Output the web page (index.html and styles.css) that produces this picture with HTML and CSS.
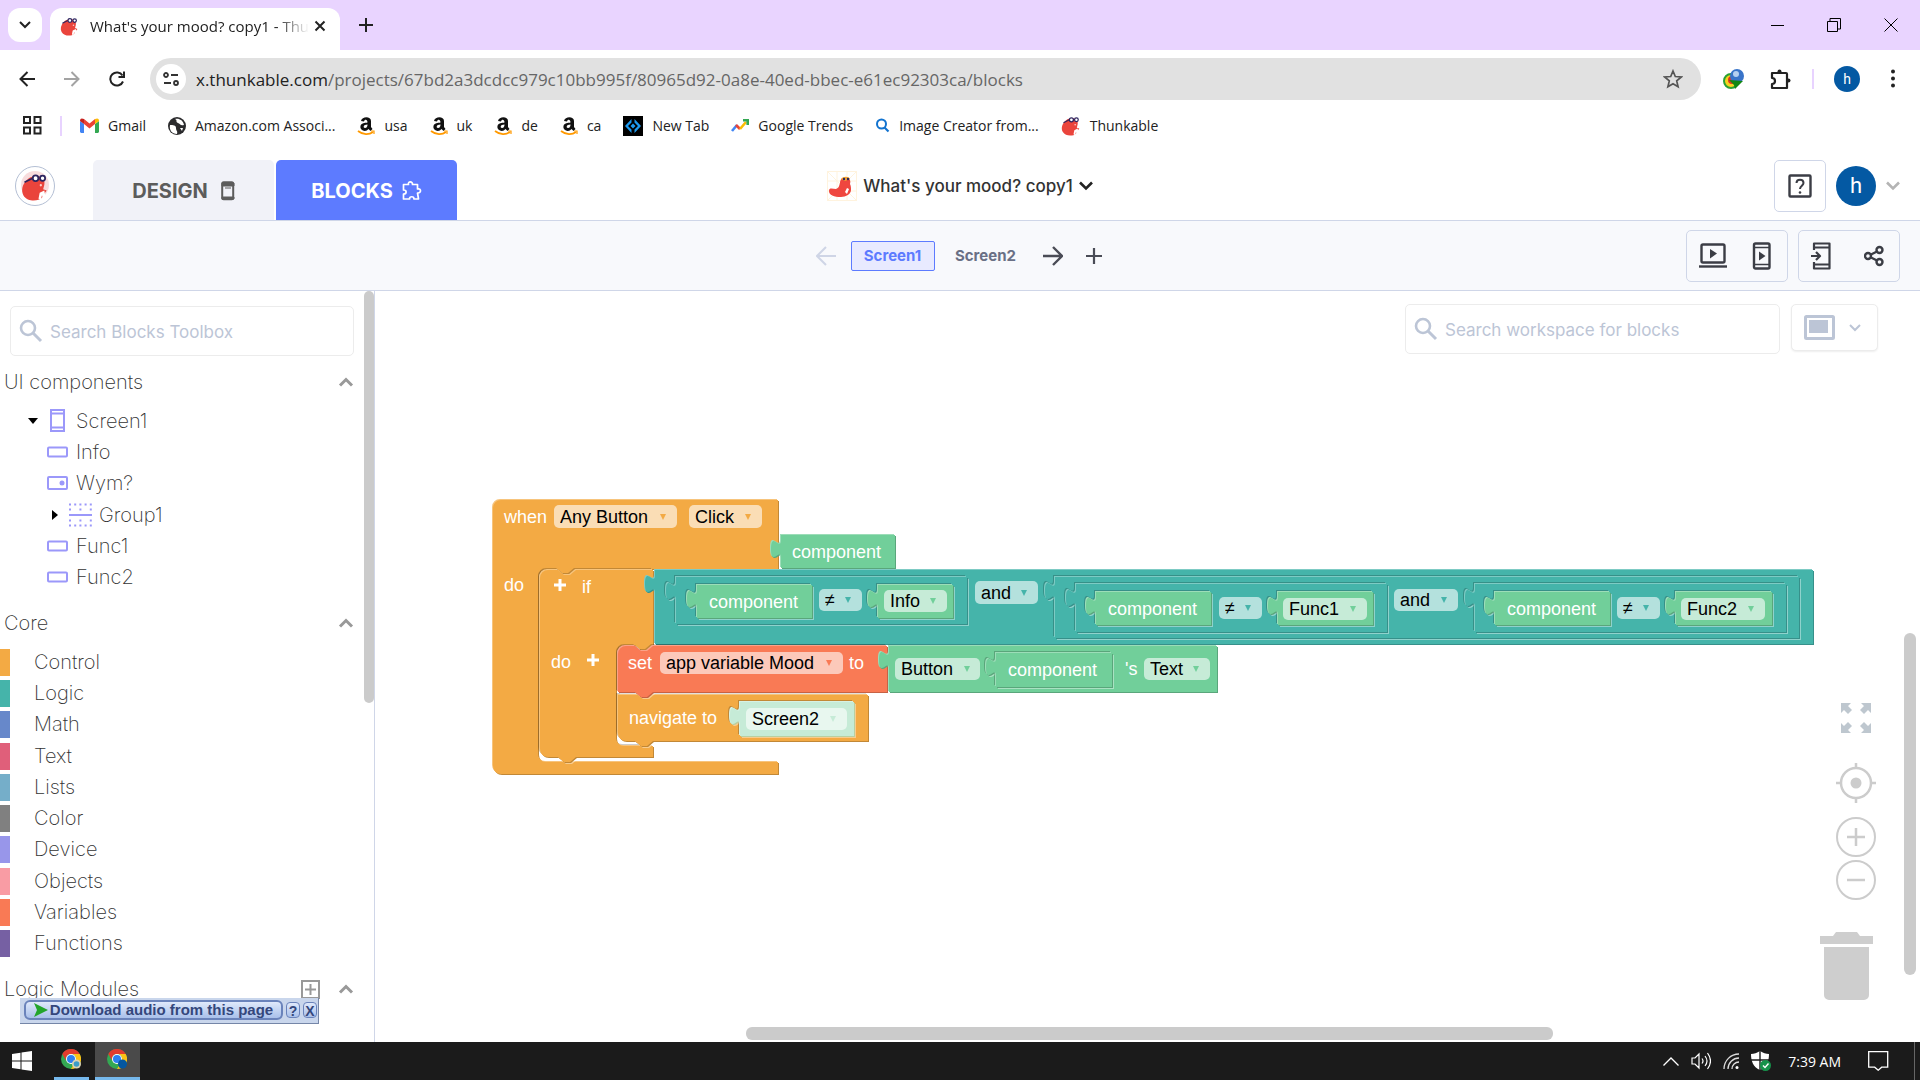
FILE: index.html
```html
<!DOCTYPE html>
<html lang="en">
<head>
  <meta charset="UTF-8" />
  <meta name="viewport" content="width=device-width, initial-scale=1.0"/>
  <title>What's your mood? copy1 - Thunkable</title>
  <link rel="stylesheet" href="styles.css">
</head>
<body>
  <!-- shared shapes -->
  <svg class="defs" aria-hidden="true">
    <symbol id="beaver" viewBox="0 0 24 24">
      <path d="M5 6C1 10 0 15 2 19c3 5 9 5 13 4 3-1 4-3 4-4l3-4-3-1 1-4c1-5-3-8-8-7-3 0-5 1-7 3z" fill="#ea443c"/>
      <path d="M16 17l4-2 1 6-2 1-1-3-1 4-2-1z" fill="#fff"/>
      <path d="M3 8l7-3.500" stroke="#2d2560" stroke-width="1.400"/>
      <circle cx="12.500" cy="4.500" r="2.400" fill="#fff" stroke="#2d2560" stroke-width="1.500"/>
      <circle cx="18.500" cy="4.500" r="2.200" fill="#fff" stroke="#2d2560" stroke-width="1.500"/>
      <circle cx="17" cy="10.500" r="1" fill="#fbd0cc"/>
    </symbol>
    <symbol id="amazon" viewBox="0 0 18 20">
      <path d="M4 5c1-5 10-5 10 0v6l1.500 2-2 2-2-2c-3 4-9 1-8-3C4 7 8 7 10.500 6.500 10.500 3 7.500 3 7 5.500zM10.500 8.500C6 8.500 6 12 8 12s2.500-2 2.500-3.500z" fill="#111"/>
      <path d="M1 15c5 4 11 4 15 1" fill="none" stroke="#f90" stroke-width="1.800"/>
      <path d="M14 15h3v3" fill="none" stroke="#f90" stroke-width="1.200"/>
    </symbol>
    <symbol id="search" viewBox="0 0 24 24">
      <circle cx="9" cy="9" r="7" fill="none" stroke="#bcc5d6" stroke-width="2.600"/>
      <path d="M14 14l8 8" stroke="#bcc5d6" stroke-width="3"/>
    </symbol>
    <symbol id="up" viewBox="0 0 16 10"><path d="M2 8.500l6-6 6 6" fill="none" stroke="#999" stroke-width="3"/></symbol>
    <symbol id="label" viewBox="0 0 22 12"><rect x="1" y="1.500" width="19" height="9" rx="1" fill="none" stroke="#9b98fa" stroke-width="2"/></symbol>
    <symbol id="chrome" viewBox="0 0 20 20">
      <circle cx="10" cy="10" r="10" fill="#34a853"/>
      <path d="M1.300 5A10 10 0 0 1 18.700 5H10a5 5 0 0 0-4.400 7.500z" fill="#e33b2e"/>
      <path d="M18.700 5A10 10 0 0 1 10 20l4.400-7.500A5 5 0 0 0 10 5z" fill="#fbc116"/>
      <circle cx="10" cy="10" r="5" fill="#fff"/>
      <circle cx="10" cy="10" r="4" fill="#2d7ff0"/>
    </symbol>
    <symbol id="caret" viewBox="0 0 8 8"><path d="M1 1h6l-3 6z" fill="currentColor"/></symbol>
  </svg>

  <header class="tabstrip">
    <button class="tab-search" aria-label="Search tabs"><svg width="12" height="8" viewBox="0 0 12 8"><path d="M1 1l5 5 5-5" fill="none" stroke="#222" stroke-width="2"/></svg></button>
    <div class="tab">
      <svg width="19" height="19"><use href="#beaver"/></svg>
      <span class="tab-title">What's your mood? copy1 - Thu</span>
      <button class="plain" aria-label="Close tab"><svg width="12" height="12" viewBox="0 0 12 12"><path d="M1.500 1.500l9 9M10.500 1.500l-9 9" stroke="#222" stroke-width="2"/></svg></button>
    </div>
    <button class="plain new-tab" aria-label="New tab"><svg width="14" height="14" viewBox="0 0 14 14"><path d="M7 0v14M0 7h14" stroke="#222" stroke-width="2"/></svg></button>
    <div class="win-buttons">
      <button class="plain" aria-label="Minimize"><svg width="13" height="13" viewBox="0 0 13 13"><path d="M0 6.500h13" stroke="#000"/></svg></button>
      <button class="plain" aria-label="Restore"><svg width="14" height="14" viewBox="0 0 14 14"><path d="M.5 3.500h10v10H.5zM3 3V.5h10.500v10.500H11" fill="none" stroke="#000"/></svg></button>
      <button class="plain" aria-label="Close"><svg width="14" height="14" viewBox="0 0 14 14"><path d="M.5.5l13 13M13.500.5l-13 13" stroke="#000"/></svg></button>
    </div>
  </header>

  <nav class="toolbar">
    <button class="plain" aria-label="Back"><svg width="16" height="16" viewBox="0 0 16 16"><path d="M16 8H2M8.500 1l-7 7 7 7" fill="none" stroke="#222" stroke-width="2"/></svg></button>
    <button class="plain" aria-label="Forward"><svg width="16" height="16" viewBox="0 0 16 16"><path d="M0 8h14M7.500 1l7 7-7 7" fill="none" stroke="#a3a3a3" stroke-width="2"/></svg></button>
    <button class="plain" aria-label="Reload"><svg width="16" height="16" viewBox="0 0 16 16"><path d="M14 10.500A6.600 6.600 0 1 1 13.500 4.500M15 .5v5.500H9.500" fill="none" stroke="#222" stroke-width="2"/></svg></button>
    <div class="address">
      <button class="site-info" aria-label="Site information"><svg width="16" height="14" viewBox="0 0 16 14"><g fill="none" stroke="#333" stroke-width="1.800"><circle cx="3" cy="3" r="2"/><path d="M8 3h7M1 11h7"/><circle cx="13" cy="11" r="2"/></g></svg></button>
      <a class="url" href="#">x.thunkable.com<span>/projects/67bd2a3dcdcc979c10bb995f/80965d92-0a8e-40ed-bbec-e61ec92303ca/blocks</span></a>
      <button class="plain" aria-label="Bookmark"><svg width="20" height="20" viewBox="0 0 20 20"><path d="M10 2l2.300 5.500 6 .5-4.600 3.900 1.400 5.900L10 14.700l-5.100 3.100 1.400-5.900L1.700 8l6-.5z" fill="none" stroke="#555" stroke-width="1.700"/></svg></button>
    </div>
    <button class="plain" aria-label="Download manager"><svg width="22" height="22" viewBox="0 0 22 22"><circle cx="8" cy="13" r="7" fill="#f5d31d" stroke="#2aa134" stroke-width="2"/><circle cx="9" cy="12" r="4" fill="#e03421"/><circle cx="14" cy="8" r="7" fill="#3974c9"/><circle cx="13" cy="6" r="3" fill="#b6d0f1"/><path d="M6 12l14 1-8 8-1-4z" fill="#128712"/></svg></button>
    <button class="plain" aria-label="Extensions"><svg width="22" height="22" viewBox="0 0 22 22"><path d="M3 5h14a1 1 0 0 1 1 1v14H3v-4c4 0 4-6 0-6z" fill="none" stroke="#222" stroke-width="2.200" stroke-linejoin="round"/><circle cx="10.500" cy="3.500" r="2" fill="#222"/><circle cx="19.500" cy="12.500" r="2" fill="#222"/></svg></button>
    <span class="divider"></span>
    <span class="avatar avatar-small">h</span>
    <button class="plain" aria-label="Menu"><svg width="4" height="20" viewBox="0 0 4 20"><g fill="#222"><circle cx="2" cy="2.500" r="2"/><circle cx="2" cy="9.500" r="2"/><circle cx="2" cy="16.500" r="2"/></g></svg></button>
  </nav>

  <nav class="bookmarks">
    <button class="plain" aria-label="Apps"><svg width="19" height="19" viewBox="0 0 19 19"><path d="M1 1h6v6H1zM11.500 1h6v6h-6zM1 11.500h6v6H1zM11.500 11.500h6v6h-6z" fill="none" stroke="#222" stroke-width="2"/></svg></button>
    <span class="divider"></span>
    <a href="#"><svg width="19" height="15" viewBox="0 0 19 15"><path d="M0 14V3l4 3v9H1z" fill="#4285f4"/><path d="M15 6l4-3v11l-1 1h-3z" fill="#34a853"/><path d="M4 6l5.500 4.500L15 6V1L9.500 5.500 4 1z" fill="#ea4335"/><path d="M0 3c0-3 2-3 4-2v5z" fill="#c5221f"/><path d="M19 3c0-3-2-3-4-2v5z" fill="#fbbc04"/></svg>Gmail</a>
    <a href="#"><svg width="18" height="18" viewBox="0 0 18 18"><circle cx="9" cy="9" r="9" fill="#2b2b2d"/><path d="M2 8c3 0 6 0 6 3s2 3 1 6C4 17 1 13 2 8zM7 2c3 1 0 3 3 4s2 3 6 2c-1-5-5-7-9-6zM12 11l3 0-1 3z" fill="#fff"/></svg>Amazon.com Associ...</a>
    <a href="#"><svg width="18" height="20"><use href="#amazon"/></svg>usa</a>
    <a href="#"><svg width="18" height="20"><use href="#amazon"/></svg>uk</a>
    <a href="#"><svg width="18" height="20"><use href="#amazon"/></svg>de</a>
    <a href="#"><svg width="18" height="20"><use href="#amazon"/></svg>ca</a>
    <a href="#"><svg width="20" height="20" viewBox="0 0 20 20"><path d="M0 0h20v20H0z"/><path d="M8.500 3L2 10l6.500 7v-3.500L5 10l3.500-3.500zM11.500 3L18 10l-6.500 7v-3.500L15 10l-3.500-3.500zM10 7.500l2.500 2.500-2.500 2.500L7.500 10z" fill="#1e9bf0"/></svg>New Tab</a>
    <a href="#"><svg width="18" height="13" viewBox="0 0 18 13"><g fill="none" stroke-width="2.600"><path d="M1 12l5-6" stroke="#4285f4"/><path d="M5 6l4 4" stroke="#ea4335"/><path d="M9 10l6-7" stroke="#fbbc04"/><path d="M12 1.300h4.700V6" stroke="#34a853"/></g></svg>Google Trends</a>
    <a href="#"><svg width="15" height="15" viewBox="0 0 15 15"><circle cx="6.500" cy="6" r="4.500" fill="none" stroke="#1273cf" stroke-width="2"/><path d="M9.500 9.500l4 4" stroke="#1273cf" stroke-width="2.200"/></svg>Image Creator from...</a>
    <a href="#"><svg width="20" height="20"><use href="#beaver"/></svg>Thunkable</a>
  </nav>

  <header class="app-header">
    <div class="header-left">
      <a class="logo" href="#" aria-label="Thunkable home"><svg width="30" height="32" viewBox="0 0 30 32"><circle cx="15" cy="15" r="14" fill="#f7dcdd"/><use href="#beaver" x="1" y="3" width="28" height="28"/></svg></a>
      <div class="mode-tabs">
        <button class="mode">DESIGN <svg width="14" height="20" viewBox="0 0 14 20"><rect x="1.200" y="1.200" width="11" height="17" rx="1.500" fill="none" stroke="#5c5c5c" stroke-width="2"/><path d="M1 2h12v3H1zM1 16h12v2H1zM4 7h6" fill="#5c5c5c" stroke="#5c5c5c"/></svg></button>
        <button class="mode mode-active">BLOCKS <svg width="20" height="20" viewBox="0 0 20 20"><path d="M1.500 3.500h5C5.500 0 11 0 10.500 3.500h5V8c4-1 4 4.500 0 4l1 6h-4.500c0-3-4.500-3-4.500 0H1.500V13c3.500 0 3.500-4 0-4z" fill="none" stroke="#fff" stroke-width="1.700" stroke-linejoin="round"/></svg></button>
      </div>
    </div>
    <button class="plain project-name">
      <svg width="30" height="30" viewBox="0 0 30 30"><path d="M.5.5h29v29H.5zM0 10h30M0 20h30M10 0v30M20 0v30M0 0l30 30M30 0L0 30" fill="none" stroke="#fff3de"/><path d="M13 12c0-5 4-6 6-5 4 0 5 3 4 6 1 2 1 4 1 6 0 4-5 7-10 7C7 26 2 24 2 20c0-4 4-2 7-2 3-1 3-3 4-6z" fill="#ef463f"/><path d="M14 8c2-3 8-3 9 0l-5 2z" fill="#f4a32f"/><circle cx="17" cy="8" r="1.200" fill="#2d2560"/><circle cx="21" cy="8" r="1.200" fill="#2d2560"/><path d="M20 17l2 1-2 5-2-2z" fill="#fff"/></svg>
      What's your mood? copy1
      <svg width="14" height="10" viewBox="0 0 14 10"><path d="M1 1.500l6 6 6-6" fill="none" stroke="#222" stroke-width="2.600"/></svg>
    </button>
    <div class="header-right">
      <button class="help" aria-label="Help"><svg width="24" height="24" viewBox="0 0 24 24"><rect x="1.500" y="1.500" width="21" height="21" rx="1" fill="none" stroke="#3b3d45" stroke-width="2.400"/><path d="M8.500 9c0-4.500 7-4.500 7 0 0 2.500-3.500 3-3.500 6" fill="none" stroke="#3b3d45" stroke-width="2"/><circle cx="12" cy="18.500" r="1.300" fill="#3b3d45"/></svg></button>
      <span class="avatar">h</span>
      <svg width="14" height="10" viewBox="0 0 14 10"><path d="M1 1.500l6 6 6-6" fill="none" stroke="#b4b4b4" stroke-width="2.600"/></svg>
    </div>
  </header>

  <nav class="screens">
    <div class="screen-list">
      <button class="plain" aria-label="Previous screen"><svg width="20" height="20" viewBox="0 0 20 20"><path d="M20 10H2M10 1l-9 9 9 9" fill="none" stroke="#cfd5e6" stroke-width="2"/></svg></button>
      <button class="screen screen-active">Screen1</button>
      <button class="screen">Screen2</button>
      <button class="plain" aria-label="Next screen"><svg width="20" height="20" viewBox="0 0 20 20"><path d="M0 10h18M10 1l9 9-9 9" fill="none" stroke="#4a4c56" stroke-width="2.400"/></svg></button>
      <button class="plain add-screen" aria-label="Add screen"><svg width="16" height="16" viewBox="0 0 16 16"><path d="M8 0v16M0 8h16" stroke="#4a4c56" stroke-width="2.200"/></svg></button>
    </div>
    <div class="preview-tools">
      <div class="tool-group">
        <button class="plain" aria-label="Web preview"><svg width="28" height="26" viewBox="0 0 28 26"><rect x="2.500" y="1.500" width="23" height="18" rx="1.500" fill="none" stroke="#3b3d45" stroke-width="2.400"/><path d="M0 23.500h28" stroke="#3b3d45" stroke-width="2.400"/><path d="M11 6l7 4.500-7 5z" fill="#3b3d45"/></svg></button>
        <button class="plain" aria-label="Mobile preview"><svg width="20" height="28" viewBox="0 0 20 28"><rect x="2" y="1.500" width="15.500" height="25" rx="1.500" fill="none" stroke="#3b3d45" stroke-width="2.400"/><path d="M2 5.500h15.500M2 22.500h15.500" stroke="#3b3d45" stroke-width="1.600"/><path d="M7 9.500l6.500 4.500L7 18.500z" fill="#3b3d45"/></svg></button>
      </div>
      <div class="tool-group">
        <button class="plain" aria-label="Publish"><svg width="20" height="28" viewBox="0 0 20 28"><path d="M3 8V1.500h15.500v25H3V20M3 5.500h15.500M3 22.500h15.500M0 14h8M5 10l4 4-4 4" fill="none" stroke="#3b3d45" stroke-width="2.200" stroke-linejoin="round"/></svg></button>
        <button class="plain" aria-label="Share"><svg width="20" height="22" viewBox="0 0 20 22"><g fill="none" stroke="#3b3d45" stroke-width="2.400"><circle cx="4" cy="11" r="3"/><circle cx="15.500" cy="5" r="3"/><circle cx="15.500" cy="17" r="3"/><path d="M7 9.500l6-3M7 12.500l6 3"/></g></svg></button>
      </div>
    </div>
  </nav>

  <main>
    <aside class="sidebar">
      <div class="toolbox">
        <label class="search-box">
          <svg width="24" height="24"><use href="#search"/></svg>
          <input type="text" placeholder="Search Blocks Toolbox" aria-label="Search Blocks Toolbox">
        </label>
        <h2>UI components <svg width="16" height="10"><use href="#up"/></svg></h2>
        <ul class="tree">
          <li><svg class="arrow" width="10" height="8" viewBox="0 0 10 8"><path d="M0 1h10L5 7z"/></svg><svg width="22" height="24" viewBox="0 0 22 24"><path d="M4 1h13v21H4zM4 4.500h13M4 18.500h13" fill="none" stroke="#9b98fa" stroke-width="2"/></svg>Screen1</li>
          <li><svg width="22" height="12"><use href="#label"/></svg>Info</li>
          <li><svg width="22" height="14" viewBox="0 0 22 14"><rect x="1" y="1" width="19" height="12" rx="1" fill="none" stroke="#9b98fa" stroke-width="2"/><circle cx="15" cy="7" r="2.500" fill="#9b98fa"/></svg>Wym?</li>
          <li class="nested"><svg class="arrow" width="8" height="10" viewBox="0 0 8 10"><path d="M1 0v10l6-5z"/></svg><svg width="24" height="24" viewBox="0 0 24 24"><path d="M1 1.500h23M1 22.500h23" stroke="#9b98fa" stroke-width="2" stroke-dasharray="2 3.200"/><path d="M1 6.500h23M1 17.500h23" stroke="#9b98fa" stroke-width="2" stroke-dasharray="2 8.400"/><path d="M1 12h23" stroke="#9b98fa" stroke-width="2"/></svg>Group1</li>
          <li><svg width="22" height="12"><use href="#label"/></svg>Func1</li>
          <li><svg width="22" height="12"><use href="#label"/></svg>Func2</li>
        </ul>
        <h2>Core <svg width="16" height="10"><use href="#up"/></svg></h2>
        <ul class="drawers">
          <li class="control">Control</li>
          <li class="logic">Logic</li>
          <li class="math">Math</li>
          <li class="text">Text</li>
          <li class="lists">Lists</li>
          <li class="color">Color</li>
          <li class="device">Device</li>
          <li class="objects">Objects</li>
          <li class="variables">Variables</li>
          <li class="functions">Functions</li>
        </ul>
        <h2>Logic Modules
          <button class="plain add-module" aria-label="Add module"><svg width="19" height="19" viewBox="0 0 19 19"><path d="M1 1h17v17H1zM9.500 4v11M4 9.500h11" fill="none" stroke="#999" stroke-width="2"/></svg></button>
          <svg width="16" height="10"><use href="#up"/></svg>
        </h2>
      </div>
      <span class="scrollbar toolbox-scroll"></span>
      <div class="idm">
        <button class="idm-main"><svg width="14" height="14" viewBox="0 0 14 14"><path d="M0 0l14 7-14 7 3-7z" fill="#23a52c"/></svg>Download audio from this page</button>
        <button class="idm-small">?</button>
        <button class="idm-small">X</button>
      </div>
    </aside>

    <section class="workspace">
      <div class="workspace-bar">
        <label class="search-box">
          <svg width="24" height="24"><use href="#search"/></svg>
          <input type="text" placeholder="Search workspace for blocks" aria-label="Search workspace for blocks">
        </label>
        <button class="view-menu" aria-label="View">
          <svg width="32" height="26" viewBox="0 0 32 26"><rect x="1.500" y="1.500" width="28" height="22" rx="1" fill="none" stroke="#bcc5d6" stroke-width="3"/><path d="M5 5h19v13H5z" fill="#bcc5d6"/></svg>
          <svg width="12" height="8" viewBox="0 0 12 8"><path d="M1 1l5 5 5-5" fill="none" stroke="#bcc5d6" stroke-width="2"/></svg>
        </button>
      </div>

      <svg class="canvas" width="1360" height="310" viewBox="480 480 1360 310">
        <!-- when Any Button Click -->
        <path class="orange" d="M493 508a8 8 0 0 1 8-8H778V569H575l-6 5h-6l-6-5H546a8 8 0 0 0-8 8V754a8 8 0 0 0 8 8H778V774H501a8 8 0 0 1-8-8z"/>
        <text x="504" y="523">when</text>
        <text x="504" y="591">do</text>
        <path class="green" d="M781 535V540c0 12-10-10-10 9s10-3 10 9V568H895V535z"/>
        <text x="792" y="558">component</text>

        <!-- if / do -->
        <path class="orange nested" d="M540 578a8 8 0 0 1 8-8H558l6 5h6l6-5H653V645l-6 5h-6l-6-5H624a8 8 0 0 0-8 8V738a8 8 0 0 0 8 8H653V757H576l-6 5h-6l-6-5H548a8 8 0 0 1-8-8z"/>
        <path class="plus" d="M560 579v12M554 585h12M593 654v12M587 660h12"/>
        <text x="582" y="593">if</text>
        <text x="551" y="668">do</text>

        <!-- and -->
        <path class="teal" d="M655 570V575c0 12-10-10-10 9s10-3 10 9V644H1813V570z"/>
        <path class="teal nested" d="M676 577V582c0 12-10-10-10 9s10-3 10 9V624H967V577z"/>
        <path class="teal nested" d="M1055 577V582c0 12-10-10-10 9s10-3 10 9V638H1799V577z"/>
        <path class="teal nested" d="M1076 584V589c0 12-10-10-10 9s10-3 10 9V632H1387V584z"/>
        <path class="teal nested" d="M1475 584V589c0 12-10-10-10 9s10-3 10 9V632H1786V584z"/>
        <path class="green nested" d="M697 585V590c0 12-10-10-10 9s10-3 10 9V618H812V585z"/>
        <path class="green nested" d="M878 585V590c0 12-10-10-10 9s10-3 10 9V618H953V585z"/>
        <path class="green nested" d="M1096 592V597c0 12-10-10-10 9s10-3 10 9V625H1211V592z"/>
        <path class="green nested" d="M1278 592V597c0 12-10-10-10 9s10-3 10 9V625H1373V592z"/>
        <path class="green nested" d="M1495 592V597c0 12-10-10-10 9s10-3 10 9V625H1610V592z"/>
        <path class="green nested" d="M1676 592V597c0 12-10-10-10 9s10-3 10 9V625H1772V592z"/>
        <text x="709" y="608">component</text>
        <text x="1108" y="615">component</text>
        <text x="1507" y="615">component</text>

        <!-- navigate to -->
        <path class="orange nested" d="M618 695H868V741H653l-6 5h-6l-6-5H626a8 8 0 0 1-8-8z"/>
        <text x="629" y="724">navigate to</text>
        <path class="mint nested" d="M740 702V707c0 12-10-10-10 9s10-3 10 9V736H854V702z"/>

        <!-- set app variable -->
        <path class="red nested" d="M618 654a8 8 0 0 1 8-8H635l6 5h6l6-5H887V692H653l-6 5h-6l-6-5H618z"/>
        <text x="628" y="669">set</text>
        <text x="849" y="669">to</text>
        <path class="green" d="M889 646V651c0 12-10-10-10 9s10-3 10 9V692H1217V646z"/>
        <path class="green nested" d="M996 653V658c0 12-10-10-10 9s10-3 10 9V687H1112V653z"/>
        <text x="1008" y="676">component</text>
        <text x="1125" y="675">'s</text>

        <!-- fields -->
        <foreignObject x="554" y="505" width="123" height="23"><select class="on-orange" aria-label="Component"><option>Any Button</option></select></foreignObject>
        <foreignObject x="689" y="505" width="73" height="23"><select class="on-orange" aria-label="Event"><option>Click</option></select></foreignObject>
        <foreignObject x="660" y="652" width="183" height="22"><select class="on-red" aria-label="Variable"><option>app variable Mood</option></select></foreignObject>
        <foreignObject x="746" y="708" width="101" height="22"><select class="on-mint" aria-label="Screen"><option>Screen2</option></select></foreignObject>
        <foreignObject x="819" y="589" width="43" height="22"><select class="on-teal" aria-label="Compare"><option>≠</option></select></foreignObject>
        <foreignObject x="884" y="590" width="63" height="22"><select class="on-green" aria-label="Button"><option>Info</option></select></foreignObject>
        <foreignObject x="975" y="581" width="63" height="23"><select class="on-teal" aria-label="Operator"><option>and</option></select></foreignObject>
        <foreignObject x="1219" y="597" width="43" height="22"><select class="on-teal" aria-label="Compare"><option>≠</option></select></foreignObject>
        <foreignObject x="1283" y="598" width="84" height="22"><select class="on-green" aria-label="Button"><option>Func1</option></select></foreignObject>
        <foreignObject x="1394" y="589" width="64" height="22"><select class="on-teal" aria-label="Operator"><option>and</option></select></foreignObject>
        <foreignObject x="1617" y="597" width="43" height="22"><select class="on-teal" aria-label="Compare"><option>≠</option></select></foreignObject>
        <foreignObject x="1681" y="598" width="84" height="22"><select class="on-green" aria-label="Button"><option>Func2</option></select></foreignObject>
        <foreignObject x="895" y="658" width="85" height="22"><select class="on-green" aria-label="Type"><option>Button</option></select></foreignObject>
        <foreignObject x="1144" y="658" width="66" height="22"><select class="on-green" aria-label="Property"><option>Text</option></select></foreignObject>

        <g class="carets orange-caret">
          <use href="#caret" x="659" y="513" width="8" height="8"/>
          <use href="#caret" x="744" y="513" width="8" height="8"/>
        </g>
        <g class="carets red-caret"><use href="#caret" x="825" y="659" width="8" height="8"/></g>
        <g class="carets mint-caret"><use href="#caret" x="829" y="715" width="8" height="8"/></g>
        <g class="carets teal-caret">
          <use href="#caret" x="844" y="596" width="8" height="8"/>
          <use href="#caret" x="1020" y="589" width="8" height="8"/>
          <use href="#caret" x="1244" y="604" width="8" height="8"/>
          <use href="#caret" x="1440" y="596" width="8" height="8"/>
          <use href="#caret" x="1642" y="604" width="8" height="8"/>
        </g>
        <g class="carets green-caret">
          <use href="#caret" x="929" y="597" width="8" height="8"/>
          <use href="#caret" x="1349" y="605" width="8" height="8"/>
          <use href="#caret" x="1747" y="605" width="8" height="8"/>
          <use href="#caret" x="963" y="665" width="8" height="8"/>
          <use href="#caret" x="1192" y="665" width="8" height="8"/>
        </g>
      </svg>

      <div class="zoom-controls">
        <button class="plain" aria-label="Fullscreen"><svg width="30" height="30" viewBox="0 0 30 30"><path d="M0 0h10L7 3l4 4-4 4-4-4-3 3zM30 0v10l-3-3-4 4-4-4 4-4-3-3zM0 30V20l3 3 4-4 4 4-4 4 3 3zM30 30H20l3-3-4-4 4-4 4 4 3-3z" fill="#bec7cf"/></svg></button>
        <button class="plain" aria-label="Center"><svg width="40" height="40" viewBox="0 0 40 40"><circle cx="20" cy="20" r="15" fill="none" stroke="#ccc" stroke-width="2.500"/><circle cx="20" cy="20" r="5.500" fill="#ccc"/><path d="M20 0v6M20 34v6M0 20h6M34 20h6" stroke="#ccc" stroke-width="2.500"/></svg></button>
        <button class="plain zoom-in" aria-label="Zoom in"><svg width="40" height="40" viewBox="0 0 40 40"><circle cx="20" cy="20" r="19" fill="none" stroke="#ccc" stroke-width="2"/><path d="M20 11v18M11 20h18" stroke="#ccc" stroke-width="2.500"/></svg></button>
        <button class="plain" aria-label="Zoom out"><svg width="40" height="40" viewBox="0 0 40 40"><circle cx="20" cy="20" r="19" fill="none" stroke="#ccc" stroke-width="2"/><path d="M11 20h18" stroke="#ccc" stroke-width="2.500"/></svg></button>
      </div>
      <svg class="trash" width="53" height="68" viewBox="0 0 53 68"><path d="M0 4h13l3-4h21l3 4h13v8H0zM4 15h45v48a5 5 0 0 1-5 5H9a5 5 0 0 1-5-5z" fill="#cecece"/></svg>
      <span class="scrollbar scroll-y"></span>
      <span class="scrollbar scroll-x"></span>
    </section>
  </main>

  <footer class="taskbar">
    <button class="plain start" aria-label="Start"><svg width="20" height="20" viewBox="0 0 20 20"><path d="M0 3l8.500-1.300v7.800H0zM9.500 1.500L20 0v9.500H9.500zM0 10.500h8.500v7.800L0 17zM9.500 10.500H20V20L9.500 18.500z" fill="#fff"/></svg></button>
    <button class="task" aria-label="Chrome"><svg width="22" height="22" viewBox="0 0 22 22"><use href="#chrome" width="20" height="20"/><circle cx="15.500" cy="15" r="4.500" fill="#d9d3b4"/><circle cx="15.500" cy="15" r="2.800" fill="#3a9bc9"/></svg></button>
    <button class="task task-active" aria-label="Chrome profile"><svg width="22" height="22" viewBox="0 0 22 22"><use href="#chrome" width="20" height="20"/><circle cx="15.500" cy="15" r="4.500" fill="#0457a0"/></svg></button>
    <div class="tray">
      <svg width="16" height="9" viewBox="0 0 16 9"><path d="M.5 8.500L8 1l7.500 7.500" fill="none" stroke="#fff" stroke-width="1.300"/></svg>
      <svg width="20" height="18" viewBox="0 0 20 18"><path d="M1 6h3l4-4v14l-4-4H1zM11 6.500q2 2.500 0 5M14 4q4 5 0 10M16.500 1q6 8 0 16" fill="none" stroke="#fff" stroke-width="1.200"/></svg>
      <svg width="16" height="16" viewBox="0 0 16 16"><path d="M1 16A15 15 0 0 1 16 1M5 16A11 11 0 0 1 16 5M9 16a7 7 0 0 1 7-7" fill="none" stroke="#ddd" stroke-width="1.300"/><circle cx="14" cy="14.500" r="1.500" fill="#fff"/></svg>
      <svg width="20" height="20" viewBox="0 0 20 20"><path d="M9 0c3 2 6 3 9 3 0 7-2 13-9 16C2 16 0 10 0 3c3 0 6-1 9-3z" fill="#fff"/><path d="M9 0v19M0 9h18" stroke="#1b1b1b" stroke-width="1.400"/><circle cx="14.500" cy="14.500" r="5.500" fill="#17924a"/><path d="M12 14.500l2 2 3.500-4" fill="none" stroke="#fff" stroke-width="1.400"/></svg>
      <time>7:39 AM</time>
      <svg width="21" height="20" viewBox="0 0 21 20"><path d="M.7.7h19v15.500h-6l-3.500 3-3.500-3h-6z" fill="none" stroke="#fff" stroke-width="1.300"/></svg>
    </div>
  </footer>
</body>
</html>
```
FILE: styles.css
```css
* {
  box-sizing: border-box;
}
body {
  margin: 0;
  height: 100vh;
  display: flex;
  flex-direction: column;
  overflow: hidden;
  font-family: "Open Sans", "Noto Sans", sans-serif;
  background: white;
  color: #222;
}
button {
  font: inherit;
  color: inherit;
  padding: 0;
  border: none;
  cursor: pointer;
}
svg {
  flex: none;
}
.defs {
  position: absolute;
  width: 0;
  height: 0;
}
.plain {
  background: none;
  display: flex;
  align-items: center;
}
.divider {
  width: 2px;
  height: 20px;
  background: #e8d3ff;
}

/* browser window */
.tabstrip {
  height: 50px;
  flex: none;
  display: flex;
  align-items: center;
  padding-left: 8px;
  background: #e9d4ff;
}
.tab-search {
  width: 34px;
  height: 34px;
  border-radius: 12px;
  background: white;
  display: flex;
  align-items: center;
  justify-content: center;
}
.tab {
  width: 290px;
  align-self: stretch;
  margin: 8px 19px 0 8px;
  padding: 0 14px 6px 10px;
  display: flex;
  align-items: center;
  gap: 11px;
  border-radius: 12px 12px 0 0;
  background: white;
}
.tab-title {
  flex: 1;
  margin-right: -6px;
  font-size: 15px;
  white-space: nowrap;
  -webkit-mask-image: linear-gradient(to right, #000 85%, transparent);
  mask-image: linear-gradient(to right, #000 85%, transparent);
}
.win-buttons {
  margin-left: auto;
  margin-right: 22px;
  display: flex;
  gap: 43px;
}
.toolbar {
  height: 58px;
  flex: none;
  display: flex;
  align-items: center;
  padding: 0 25px 0 19px;
  gap: 24px;
}
.toolbar > .plain:nth-child(-n+2) {
  margin-right: 5px;
}
.toolbar .divider {
  margin-left: -3px;
}
.address {
  flex: 1;
  height: 42px;
  margin-left: 1px;
  margin-right: -2px;
  padding: 0 18px 0 6px;
  display: flex;
  align-items: center;
  border-radius: 21px;
  background: #e1e1e1;
}
.site-info {
  width: 30px;
  height: 30px;
  border-radius: 50%;
  background: white;
  display: flex;
  align-items: center;
  justify-content: center;
}
.url {
  flex: 1;
  margin-left: 10px;
  font-size: 17px;
  color: #222;
  text-decoration: none;
}
.url span {
  color: #666;
}
.avatar {
  width: 40px;
  height: 40px;
  border-radius: 50%;
  background: #0459a3;
  color: white;
  font: 22px Roboto, sans-serif;
  line-height: 40px;
  text-align: center;
}
.avatar-small {
  width: 26px;
  height: 26px;
  margin: 0 7px 0 -4px;
  font-size: 14px;
  line-height: 26px;
}
.bookmarks {
  height: 35px;
  flex: none;
  display: flex;
  align-items: center;
  padding-left: 23px;
  gap: 22px;
}
.bookmarks .divider {
  margin: 0 -4px;
}
.bookmarks a {
  display: flex;
  align-items: center;
  gap: 9px;
  font-size: 14px;
  color: #222;
  text-decoration: none;
  white-space: nowrap;
}

/* Thunkable header */
.app-header {
  margin-top: 7px;
  height: 71px;
  padding-top: 2px;
  flex: none;
  display: grid;
  grid-template-columns: 1fr auto 1fr;
  align-items: center;
  border-bottom: 1px solid #cfd6e8;
  font-family: Inter, sans-serif;
}
.header-left {
  display: flex;
  align-items: center;
  align-self: stretch;
  padding-left: 15px;
}
.logo {
  width: 40px;
  height: 40px;
  display: flex;
  align-items: center;
  justify-content: center;
  border: 1px solid #b4bfd4;
  border-radius: 50%;
}
.mode-tabs {
  display: flex;
  align-self: flex-end;
  gap: 2px;
  margin-left: 38px;
}
.mode {
  width: 181px;
  height: 60px;
  padding-top: 1px;
  display: flex;
  align-items: center;
  justify-content: center;
  gap: 13px;
  border-radius: 5px 5px 0 0;
  background: #f1f2f8;
  color: #5c5c5c;
  font-size: 20px;
  font-weight: 700;
}
.mode-active {
  background: #5d7bff;
  color: white;
  gap: 9px;
}
.project-name {
  gap: 6px;
  font-size: 17px;
  font-weight: 500;
  color: #333;
}
.header-right {
  display: flex;
  align-items: center;
  justify-content: flex-end;
  gap: 10px;
  padding-right: 20px;
}
.help {
  width: 52px;
  height: 52px;
  display: flex;
  align-items: center;
  justify-content: center;
  border: 1px solid #cfd6e8;
  border-radius: 5px;
  background: white;
}
.screens {
  height: 70px;
  flex: none;
  display: grid;
  grid-template-columns: 1fr auto 1fr;
  align-items: center;
  border-bottom: 1px solid #cfd6e8;
  background: #f8f9fc;
}
.screen-list {
  grid-column: 2;
  display: flex;
  align-items: center;
  gap: 15px;
}
.screen {
  width: 84px;
  height: 30px;
  border: 1px solid transparent;
  border-radius: 2px;
  background: none;
  font: 700 15px Inter, sans-serif;
  color: #6a7085;
}
.screen-active {
  margin-right: -6px;
  border-color: #5d7bff;
  background: #e8eaff;
  color: #5d7bff;
}
.add-screen {
  margin-left: 8px;
  margin-right: 3px;
}
.preview-tools {
  display: flex;
  justify-content: flex-end;
  gap: 10px;
  padding-right: 20px;
}
.tool-group {
  width: 102px;
  height: 52px;
  display: flex;
  align-items: center;
  justify-content: space-between;
  padding: 0 15px 0 12px;
  border: 1px solid #cfd6e8;
  border-radius: 5px;
}

/* toolbox */
main {
  flex: 1;
  min-height: 0;
  display: flex;
  font-family: Inter, sans-serif;
}
.sidebar {
  position: relative;
  width: 375px;
  flex: none;
  border-right: 1px solid #cfd6e8;
}
.toolbox {
  height: 100%;
  padding-top: 15px;
  overflow: hidden;
}
.search-box {
  display: flex;
  align-items: center;
  gap: 7px;
  height: 50px;
  padding: 0 8px;
  border: 1px solid #ececec;
  border-radius: 5px;
}
.search-box input {
  flex: 1;
  min-width: 0;
  padding: 2px 0 0;
  border: none;
  outline: none;
  background: none;
  font: 17px Inter, sans-serif;
}
.search-box input::placeholder {
  color: #bcc5d6;
}
.toolbox .search-box {
  margin: 0 20px 0 10px;
}
h2 {
  display: flex;
  align-items: center;
  justify-content: space-between;
  height: 32px;
  margin: 10px 20px 8px 4px;
  font-size: 20px;
  font-weight: 200;
  color: #333;
}
ul {
  list-style: none;
  margin: 0;
  padding: 0;
  display: flex;
  flex-direction: column;
  justify-content: space-between;
  font-size: 20px;
  font-weight: 200;
  color: #333;
}
.tree {
  height: 188px;
  margin: -1px 0 14px;
}
.tree li {
  display: flex;
  align-items: center;
  gap: 7px;
  height: 31px;
  padding-left: 47px;
}
.tree .arrow {
  margin-left: -19px;
  margin-right: 2px;
}
.tree .nested {
  padding-left: 70px;
}
.drawers {
  height: 308px;
  margin: 10px 0 16px;
}
.drawers li {
  height: 27px;
  padding-left: 24px;
  border-left: 10px solid;
  line-height: 27px;
}
.drawers .control { border-color: #f3aa44; }
.drawers .logic { border-color: #45b4aa; }
.drawers .math { border-color: #6788ca; }
.drawers .text { border-color: #e05f7a; }
.drawers .lists { border-color: #75aec9; }
.drawers .color { border-color: #808080; }
.drawers .device { border-color: #9896ea; }
.drawers .objects { border-color: #f99ca4; }
.drawers .variables { border-color: #f97a55; }
.drawers .functions { border-color: #7660a3; }
.add-module {
  margin-left: auto;
  margin-right: 18px;
}
.scrollbar {
  position: absolute;
  border-radius: 6px;
  background: #cbcbcb;
}
.toolbox-scroll {
  top: 0;
  right: 0;
  width: 10px;
  height: 412px;
}
.idm {
  position: absolute;
  left: 20px;
  bottom: 18px;
  width: 299px;
  height: 26px;
  display: flex;
  align-items: center;
  gap: 3px;
  padding: 0 0 2px 4px;
  border: solid #7586a8;
  border-width: 0 1px 1px 0;
  background: #c9d6ec;
}
.idm button {
  border: 1px solid #6a83bb;
  background: linear-gradient(#dfe9fb, #a9c0ea);
  color: #34477c;
  font: 700 14px "Liberation Sans", sans-serif;
}
.idm .idm-main {
  width: 259px;
  height: 20px;
  display: flex;
  align-items: center;
  justify-content: center;
  gap: 2px;
  border-width: 2px;
  border-radius: 6px;
  font-size: 15px;
  white-space: nowrap;
}
.idm .idm-small {
  width: 14px;
  height: 16px;
  border-radius: 4px;
}

/* workspace */
.workspace {
  position: relative;
  flex: 1;
  overflow: hidden;
}
.workspace-bar {
  display: flex;
  justify-content: flex-end;
  align-items: flex-start;
  gap: 11px;
  padding: 13px 42px 0 0;
}
.workspace-bar .search-box {
  width: 375px;
}
.view-menu {
  width: 87px;
  height: 47px;
  display: flex;
  align-items: center;
  justify-content: center;
  gap: 13px;
  padding-right: 4px;
  border: 1px solid #ececec;
  border-radius: 5px;
  background: white;
  box-shadow: 0 1px 2px #eee;
}
.canvas {
  position: absolute;
  left: 105px;
  top: 189px;
  font-family: "Liberation Sans", Arial, sans-serif;
  font-size: 18px;
}
.canvas text {
  fill: white;
}
.orange { fill: #f3aa44; --light: #f7c47c; --dark: #c28836; }
.teal { fill: #45b4aa; --light: #7dcbc4; --dark: #37908a; }
.green { fill: #71cf9a; --light: #9cddb8; --dark: #5aa67b; }
.red { fill: #f97a55; --light: #fba288; --dark: #c76244; }
.mint { fill: #c6ebd7; --light: #d7f1e3; --dark: #b9cfa0; }
.canvas path {
  filter: drop-shadow(-1px -1px 0 var(--light)) drop-shadow(1px 1px 0 var(--dark));
}
.canvas .nested {
  filter: drop-shadow(-1px -1px 0 var(--light)) drop-shadow(1px 1px 0 var(--dark)) drop-shadow(-1px -1px 0 rgba(0, 0, 0, 0.2)) drop-shadow(1px 1px 0 rgba(255, 255, 255, 0.4));
}
.canvas .plus {
  filter: none;
  stroke: white;
  stroke-width: 3px;
}
.canvas select {
  appearance: none;
  display: block;
  width: 100%;
  height: 100%;
  padding: 0 6px;
  border: none;
  border-radius: 5px;
  font: 18px "Liberation Sans", Arial, sans-serif;
  color: black;
}
.canvas .on-orange { background: #faddb5; }
.canvas .on-red { background: #fcc9ba; }
.canvas .on-mint { background: #e8f7ef; }
.canvas .on-teal { background: #b4e1dd; }
.canvas .on-green { background: #c6ebd7; }
.carets {
  pointer-events: none;
}
.orange-caret { color: #f3aa44; }
.red-caret { color: #f97a55; }
.mint-caret { color: #c6ebd7; }
.teal-caret { color: #45b4aa; }
.green-caret { color: #71cf9a; }
.zoom-controls {
  position: absolute;
  right: 44px;
  bottom: 142px;
  display: flex;
  flex-direction: column;
  align-items: center;
  gap: 3px;
}
.zoom-controls .plain:first-child {
  margin-bottom: 27px;
}
.zoom-in {
  margin-top: 11px;
}
.trash {
  position: absolute;
  right: 47px;
  bottom: 42px;
}
.scroll-y {
  top: 342px;
  right: 4px;
  width: 12px;
  height: 342px;
}
.scroll-x {
  left: 371px;
  bottom: 2px;
  width: 807px;
  height: 13px;
}

/* taskbar */
.taskbar {
  height: 38px;
  flex: none;
  display: flex;
  align-items: center;
  background: #1b1b1b;
  color: white;
}
.start {
  margin: 0 22px 0 12px;
}
.task {
  width: 35px;
  height: 38px;
  display: flex;
  align-items: center;
  justify-content: center;
  margin-right: 6px;
  border-bottom: 3px solid #76b9ed;
  background: none;
}
.task-active {
  width: 45px;
  background: #4a4a4a;
}
.tray {
  margin-left: auto;
  height: 100%;
  display: flex;
  align-items: center;
  gap: 12px;
  margin-right: 5px;
  padding-right: 25px;
  border-right: 1px solid #666;
}
.tray time {
  margin: 0 15px 0 5px;
  font-size: 14px;
}
```
